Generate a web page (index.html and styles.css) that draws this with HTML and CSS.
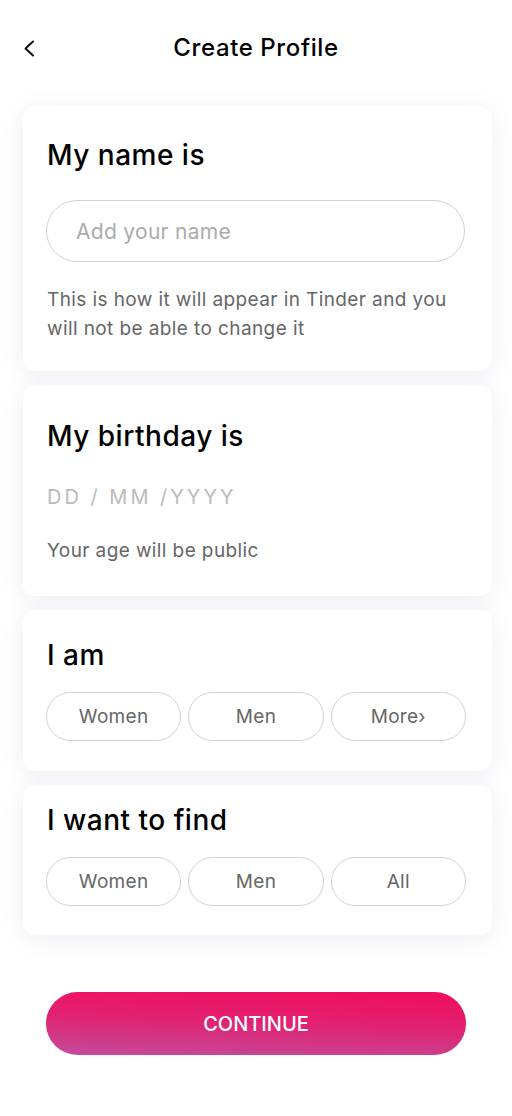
FILE: index.html
```html
<!DOCTYPE html>
<html lang="en">
<head>
    <meta charset="UTF-8">
    <meta name="viewport" content="width=device-width, initial-scale=1.0">
    <title>Create Profile</title>
    <link rel="stylesheet" href="styles.css">
</head>
<body>
    <div class="header">
        <button class="back-button" aria-label="Back">
            <svg width="12" height="17" viewBox="0 0 12 17" fill="none">
                <path d="M10 1.5L2.5 8.5L10 15.5" stroke="#111" stroke-width="2" stroke-linecap="round" stroke-linejoin="round"/>
            </svg>
        </button>
        <h1>Create Profile</h1>
    </div>
    <div class="container">
        <div class="card name-card">
            <h2>My name is</h2>
            <input type="text" class="name-input" placeholder="Add your name">
            <p class="hint">This is how it will appear in Tinder and you will not be able to change it</p>
        </div>
        <div class="card birthday-card">
            <h2>My birthday is</h2>
            <p class="date-mask">DD / MM /YYYY</p>
            <p class="hint">Your age will be public</p>
        </div>
        <div class="card gender-card">
            <h2>I am</h2>
            <div class="options">
                <button class="option">Women</button>
                <button class="option">Men</button>
                <button class="option">More&rsaquo;</button>
            </div>
        </div>
        <div class="card find-card">
            <h2>I want to find</h2>
            <div class="options">
                <button class="option">Women</button>
                <button class="option">Men</button>
                <button class="option">All</button>
            </div>
        </div>
    </div>
    <button class="continue-button">CONTINUE</button>
</body>
</html>
```

FILE: styles.css
```css
body {
    font-family: Inter, "Noto Sans", sans-serif;
    margin: 0;
    background-color: #ffffff;
    color: #000;
}
.header {
    display: flex;
    align-items: center;
    justify-content: center;
    height: 94px;
    position: relative;
}
.header h1 {
    font-size: 24px;
    font-weight: 500;
    letter-spacing: 0.6px;
    margin: 0;
}
.back-button {
    position: absolute;
    left: 23px;
    top: 40px;
    background: none;
    border: none;
    padding: 0;
    cursor: pointer;
}
.container {
    display: flex;
    flex-direction: column;
    gap: 14px;
    padding: 12px 20px 0 23px;
}
.card {
    background: white;
    border-radius: 12px;
    box-shadow: 0 4px 24px rgba(40, 40, 110, 0.08);
    padding: 0 26px 0 24px;
}
h2 {
    font-size: 28px;
    font-weight: 500;
    line-height: 32px;
    letter-spacing: 0.5px;
    margin: 0;
}
.name-card {
    padding-top: 33px;
    padding-bottom: 28px;
}
.birthday-card {
    padding-top: 35px;
    padding-bottom: 31px;
}
.gender-card {
    padding-top: 29px;
    padding-bottom: 30px;
}
.find-card {
    padding-top: 19px;
    padding-bottom: 29px;
}
.name-input {
    display: block;
    width: 100%;
    box-sizing: border-box;
    height: 62px;
    margin: 29px 0 0 -1px;
    padding: 0 29px;
    border: 1px solid #d2d2d2;
    border-radius: 31px;
    font-family: inherit;
    font-size: 21px;
    letter-spacing: 0.3px;
    color: #333;
    outline: none;
}
.name-input::placeholder {
    color: #ababab;
}
.hint {
    font-size: 19px;
    line-height: 29px;
    letter-spacing: 0.4px;
    color: #666;
    margin: 23px 0 0;
}
.birthday-card .hint {
    margin-top: 25px;
}
.date-mask {
    font-size: 20px;
    line-height: 28px;
    letter-spacing: 3px;
    color: #bbb;
    margin: 31px 0 0;
}
.options {
    display: grid;
    grid-template-columns: repeat(3, 1fr);
    gap: 7px;
    margin: 21px 0 0 -1px;
}
.option {
    height: 49px;
    border: 1px solid #d2d2d2;
    border-radius: 25px;
    background: white;
    font-family: inherit;
    font-size: 19px;
    letter-spacing: 0.3px;
    color: #666;
    cursor: pointer;
}
.continue-button {
    display: block;
    width: calc(100% - 92px);
    height: 63px;
    margin: 57px 46px 0;
    border: none;
    border-radius: 32px;
    background: linear-gradient(182deg, #f20d5c 0%, #e2206f 45%, #c44a9b 100%);
    color: white;
    font-family: inherit;
    font-size: 20px;
    font-weight: 500;
    cursor: pointer;
}
```
